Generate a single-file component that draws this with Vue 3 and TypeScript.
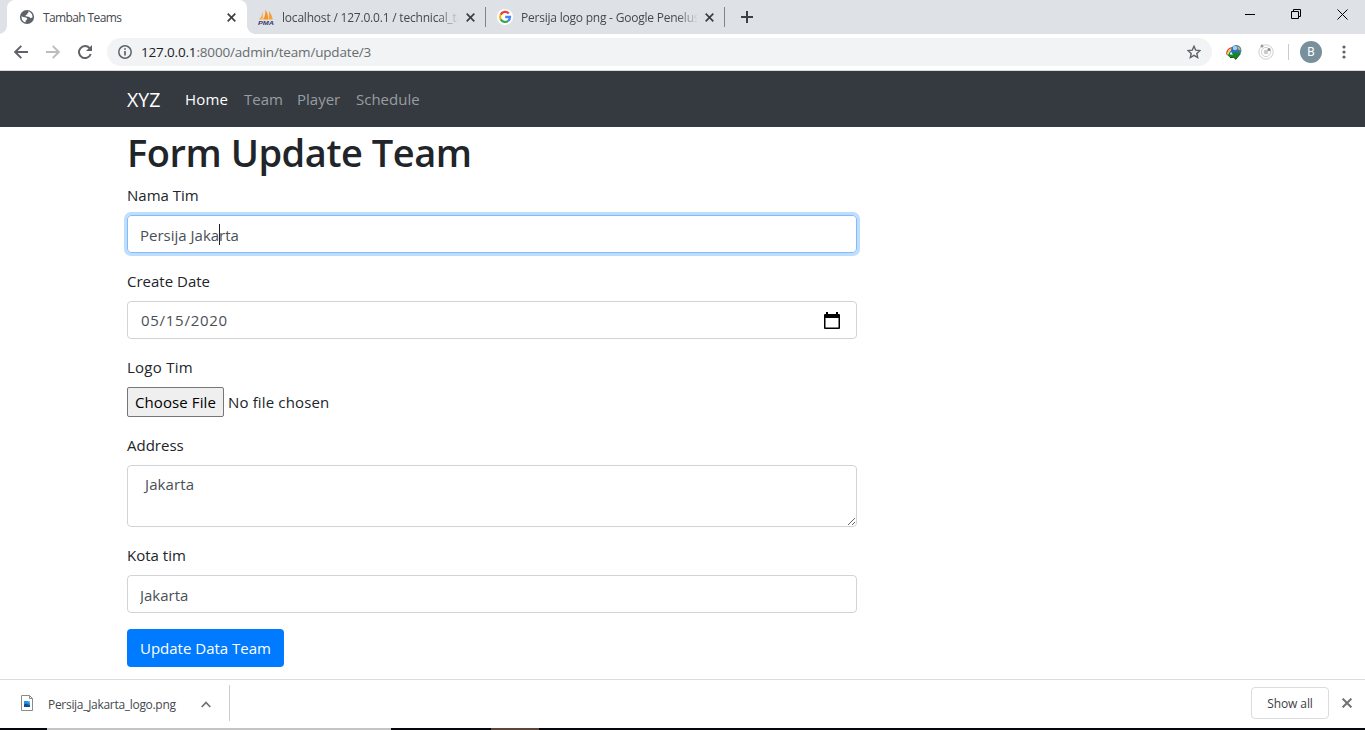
<script setup lang="ts">
import { ref } from 'vue'

interface Tab {
  icon: 'globe' | 'pma' | 'google'
  title: string
  active: boolean
}

interface NavItem {
  label: string
  key: string
}

const tabs: Tab[] = [
  { icon: 'globe', title: 'Tambah Teams', active: true },
  { icon: 'pma', title: 'localhost / 127.0.0.1 / technical_te', active: false },
  { icon: 'google', title: 'Persija logo png - Google Penelus', active: false },
]

const navItems: NavItem[] = [
  { label: 'Home', key: 'home' },
  { label: 'Team', key: 'team' },
  { label: 'Player', key: 'player' },
  { label: 'Schedule', key: 'schedule' },
]

const teamName = ref('Persija Jakarta')
const createDate = ref('05/15/2020')
const address = ref(' Jakarta')
const city = ref('Jakarta')
</script>

<template>
  <div class="window">
    <div class="tab-strip">
      <div v-for="tab in tabs" :key="tab.icon" class="tab" :class="[tab.icon, { active: tab.active }]">
        <svg v-if="tab.icon === 'globe'" class="favicon" width="16" height="16" viewBox="0 0 16 16">
          <circle cx="8" cy="8" r="7.1" fill="#5f6368" />
          <path d="M8.8 2.3 11 3 13 5.3 13.6 8.2 11.6 9.2 10.3 8 8.2 7.4 6.6 7.2 6.7 5.9 8.3 5.4 8.2 4.4 9.6 3.7ZM2.3 7.3 4.2 7.9 7 8.6 8.4 9.8 7.6 11 6.6 11.4 6.7 13.3 5 13 3 10.8Z" fill="#fff" />
        </svg>
        <svg v-else-if="tab.icon === 'pma'" class="favicon" width="16" height="16" viewBox="0 0 16 16">
          <path d="M1 10.5Q4 7.5 4.8 2.5Q5.6 7 4.5 10.5Z" fill="#f9b05c" />
          <path d="M5 10.5Q7.8 6.5 7.4.8Q10.5 5 10 10.5Z" fill="#f7941d" />
          <path d="M10.3 10.5Q11.8 6.5 10.8 2Q14.4 6 14.8 10.5Z" fill="#f8a23a" />
          <text x="0" y="15.6" class="pma-text" textLength="16" lengthAdjust="spacingAndGlyphs">PMA</text>
        </svg>
        <svg v-else class="favicon" width="16" height="16" viewBox="0 0 16 16">
          <circle cx="8" cy="8" r="8" fill="#fff" />
          <g fill="none" stroke-width="2.3">
            <path d="M11.8 4.6A5 5 0 0 0 3.6 5.7" stroke="#ea4335" />
            <path d="M3.6 5.7A5 5 0 0 0 3.6 10.3" stroke="#fbbc05" />
            <path d="M3.6 10.3A5 5 0 0 0 11.2 11.8" stroke="#34a853" />
            <path d="M11.2 11.8A5 5 0 0 0 13 8H8.2" stroke="#4285f4" />
          </g>
        </svg>
        <span class="tab-title">{{ tab.title }}</span>
        <svg class="tab-close" width="9" height="9" viewBox="0 0 9 9">
          <path d="M.7.7 8.3 8.3M8.3.7.7 8.3" stroke="#3c4043" stroke-width="1.7" />
        </svg>
      </div>
      <svg class="new-tab" width="12" height="12" viewBox="0 0 12 12">
        <path d="M6 0V12M0 6H12" stroke="#3c4043" stroke-width="2" />
      </svg>
      <div class="window-controls">
        <svg width="10" height="10" viewBox="0 0 10 10"><path d="M0 5.5H10" stroke="#000" /></svg>
        <svg width="10" height="10" viewBox="0 0 10 10" fill="none" stroke="#000">
          <path d="M.5 2.5H7.5V9.5H.5ZM2.5 2.5V.5H9.5V7.5H7.5" />
        </svg>
        <svg width="11" height="11" viewBox="0 0 11 11"><path d="M.5.5 10.5 10.5M10.5.5.5 10.5" stroke="#000" /></svg>
      </div>
    </div>

    <div class="toolbar">
      <svg class="back" width="14" height="14" viewBox="0 0 14 14" fill="none" stroke="#5f6368" stroke-width="1.9">
        <path d="M14 7H1.5M7.3.9 1.2 7 7.3 13.1" />
      </svg>
      <svg class="forward" width="14" height="14" viewBox="0 0 14 14" fill="none" stroke="#babcbe" stroke-width="1.9">
        <path d="M0 7H12.5M6.7.9 12.8 7 6.7 13.1" />
      </svg>
      <svg class="reload" width="14" height="14" viewBox="0 0 14 14">
        <path d="M11.6 3.2A6 6 0 1 0 12.7 9" fill="none" stroke="#5f6368" stroke-width="2" />
        <path d="M14 0V6H8Z" fill="#5f6368" />
      </svg>
      <div class="omnibox">
        <svg width="14" height="14" viewBox="0 0 14 14">
          <circle cx="7" cy="7" r="6.2" fill="none" stroke="#5f6368" stroke-width="1.5" />
          <path d="M7 3.2V4.8M7 6V10.6" stroke="#5f6368" stroke-width="1.7" />
        </svg>
        <span class="url"><b>127.0.0.1</b>:8000/admin/team/update/3</span>
        <svg class="star" width="14" height="14" viewBox="0 0 14 14">
          <path d="M7 1.3 8.7 5.1 13 5.5 9.8 8.4 10.7 12.6 7 10.4 3.3 12.6 4.2 8.4 1 5.5 5.3 5.1Z" fill="none" stroke="#5f6368" stroke-width="1.4" />
        </svg>
      </div>
      <svg class="ext-idm" width="18" height="16" viewBox="0 0 18 16">
        <path d="M1.8 10.5Q1.4 5 7 3.6" fill="none" stroke="#e33b24" stroke-width="1.3" />
        <path d="M3 11Q2.6 6.4 7.4 4.8" fill="none" stroke="#f2dc27" stroke-width="1.4" />
        <path d="M4.2 11.2Q4.2 7.8 7.6 6.2" fill="none" stroke="#2367bd" stroke-width="1.2" />
        <circle cx="11.2" cy="6.2" r="5.2" fill="#2d6fc0" />
        <circle cx="10" cy="4" r="2.2" fill="#9ed1f5" />
        <path d="M12.2 2 15 3.6 16 6.4 14 6.2 12.6 4.4Z" fill="#c9b23f" />
        <path d="M1.6 10.4 8 10.6 7.4 8.4 16 8.8 10.6 15.4 9 13.2 5 13.6Z" fill="#138a21" />
        <path d="M5 13.6 9 13.2 10.6 15.4 15.4 9.8" fill="none" stroke="#154b18" />
      </svg>
      <svg class="ext-orbit" width="16" height="16" viewBox="0 0 16 16">
        <g fill="none" stroke="#cfcfcf">
          <circle cx="8" cy="8" r="7.2" />
          <circle cx="8" cy="8" r="4.6" />
        </g>
        <circle cx="8" cy="8" r="2.3" fill="#cacaca" />
        <circle cx="4" cy="1.9" r="1.5" fill="#999" />
        <circle cx="11" cy="5.4" r="1.5" fill="#8c8c8c" />
      </svg>
      <span class="divider"></span>
      <span class="avatar">B</span>
      <svg class="menu" width="4" height="14" viewBox="0 0 4 14" fill="#5f6368">
        <circle cx="2" cy="2" r="1.6" /><circle cx="2" cy="7" r="1.6" /><circle cx="2" cy="12" r="1.6" />
      </svg>
    </div>

    <nav class="navbar">
      <a class="brand">XYZ</a>
      <a v-for="item in navItems" :key="item.key" class="nav-link" :class="item.key">{{ item.label }}</a>
    </nav>

    <main class="page">
      <h1>Form Update Team</h1>
      <form @submit.prevent>
        <div class="group">
          <label>Nama Tim</label>
          <div class="control focused">
            <input v-model="teamName" class="v-name" type="text" spellcheck="false" />
            <span class="caret"></span>
          </div>
        </div>
        <div class="group">
          <label>Create Date</label>
          <div class="control">
            <input v-model="createDate" class="v-date" type="text" />
            <svg class="calendar" width="16" height="17" viewBox="0 0 16 17">
              <path d="M2 0H4V2H12V0H14V2H15Q16 2 16 3V16Q16 17 15 17H1Q0 17 0 16V3Q0 2 1 2H2ZM1.5 6V15.4H14.5V6Z" fill="#000" fill-rule="evenodd" />
            </svg>
          </div>
        </div>
        <div class="group">
          <label class="l-logo">Logo Tim</label>
          <div class="file-row">
            <button type="button" class="choose">Choose File</button>
            <span class="file-name">No file chosen</span>
          </div>
        </div>
        <div class="group">
          <label>Address</label>
          <textarea v-model="address" class="v-address" spellcheck="false"></textarea>
        </div>
        <div class="group">
          <label>Kota tim</label>
          <div class="control">
            <input v-model="city" class="v-city" type="text" spellcheck="false" />
          </div>
        </div>
        <button class="submit" type="submit">Update Data Team</button>
      </form>
    </main>

    <footer class="downloads">
      <svg class="file-icon" width="12" height="16" viewBox="0 0 12 16">
        <path d="M.5.5H8.5L11.5 3.5V15.5H.5Z" fill="#fff" stroke="#8b8b8b" />
        <path d="M8.5.5V3.5H11.5" fill="none" stroke="#8b8b8b" />
        <path d="M3 6H9V12H3Z" fill="#2a8fe0" />
        <path d="M3 12V9.5L5 8.5 9 10.5V12Z" fill="#124d91" />
        <path d="M6.5 6H9V8.5Z" fill="#6fc3f5" />
      </svg>
      <span class="download-name">Persija_Jakarta_logo.png</span>
      <svg class="chevron" width="10" height="7" viewBox="0 0 10 7">
        <path d="M.7 6 5 1.5 9.3 6" fill="none" stroke="#6f7377" stroke-width="1.8" />
      </svg>
      <span class="download-divider"></span>
      <button class="show-all" type="button">Show all</button>
      <svg class="close-bar" width="10" height="10" viewBox="0 0 10 10">
        <path d="M.6.6 9.4 9.4M9.4.6.6 9.4" stroke="#6f7377" stroke-width="2" />
      </svg>
    </footer>
    <div class="taskbar-edge"><i class="dark-start"></i><i class="light"></i><i class="dark"></i><i class="brown"></i></div>
  </div>
</template>

<style>
html,
body {
  margin: 0;
  overflow: hidden;
  background: #fff;
}
</style>

<style scoped>
* {
  box-sizing: border-box;
}

.window {
  width: 1365px;
  height: 730px;
  display: flex;
  flex-direction: column;
  overflow: hidden;
  background: #fff;
  color: #212529;
  font-family: "Open Sans", "Noto Sans", sans-serif;
  font-size: 15px;
}

svg {
  display: block;
  flex: none;
}

.tab-strip {
  height: 34px;
  flex: none;
  display: flex;
  padding-left: 7px;
  background: #dee1e6;
}

.tab {
  position: relative;
  width: 239px;
  flex: none;
  display: flex;
  align-items: center;
  padding-left: 11px;
  font-size: 12px;
  color: #45494d;
}

.tab.active {
  width: 240px;
  padding-left: 12px;
  background: #fff;
  border-radius: 8px 8px 0 0;
}

.tab.active::before,
.tab.active::after {
  content: "";
  position: absolute;
  bottom: 0;
  width: 8px;
  height: 8px;
}

.tab.active::before {
  left: -8px;
  background: radial-gradient(circle at 0 0, transparent 7.5px, #fff 8px);
}

.tab.active::after {
  right: -8px;
  background: radial-gradient(circle at 100% 0, transparent 7.5px, #fff 8px);
}

.tab:not(.active)::after {
  content: "";
  position: absolute;
  right: 0;
  top: 7px;
  width: 1px;
  height: 20px;
  background: #808387;
}

.pma-text {
  font: italic bold 6px "Liberation Sans", sans-serif;
  fill: #343a70;
}

.tab-title {
  width: 176px;
  margin-left: 8px;
  margin-right: 8px;
  white-space: nowrap;
  letter-spacing: -0.2px;
}

.tab.active .tab-title {
  letter-spacing: -0.62px;
}

.tab.google .tab-title {
  letter-spacing: -0.22px;
}

.tab:not(.active) .tab-title {
  mask-image: linear-gradient(90deg, #000 156px, transparent 178px);
}

.new-tab {
  margin: 11px 0 0 16px;
}

.window-controls {
  margin-left: auto;
  display: flex;
  gap: 36px;
  padding: 9px 17px 0 0;
}

.toolbar {
  height: 37px;
  flex: none;
  display: flex;
  align-items: center;
  padding-left: 14px;
  border-bottom: 1px solid #d8dadd;
}

.forward {
  margin-left: 18px;
}

.reload {
  margin-left: 18px;
}

.omnibox {
  width: 1105px;
  height: 28px;
  margin-left: 15px;
  display: flex;
  align-items: center;
  border-radius: 14px;
  padding: 0 11px;
  background: #f1f3f4;
}

.url {
  margin-left: 9px;
  font-size: 13.5px;
  letter-spacing: -0.17px;
  color: #686c70;
}

.url b {
  font-weight: 400;
  color: #202124;
}

.star {
  margin-left: auto;
}

.ext-idm {
  margin-left: 13px;
}

.ext-orbit {
  margin-left: 15px;
}

.divider {
  width: 1px;
  height: 16px;
  margin-left: 14px;
  background: #c8cace;
}

.avatar {
  width: 22px;
  height: 22px;
  margin-left: 11px;
  border-radius: 50%;
  background: #78909c;
  color: #fff;
  font: 12px/22px Roboto, sans-serif;
  text-align: center;
}

.menu {
  margin-left: 20px;
}

.navbar {
  height: 56px;
  flex: none;
  display: flex;
  align-items: center;
  padding-left: 127px;
  background: #343a40;
}

.brand {
  width: 34px;
  margin-right: 24px;
  font-size: 19.5px;
  color: #fff;
  white-space: nowrap;
}

.nav-link {
  margin-right: 16px;
  color: #9a9da0;
  white-space: nowrap;
}

.nav-link.home {
  width: 43px;
  letter-spacing: 0.2px;
  color: #fff;
}

.nav-link.team {
  width: 37px;
}

.nav-link.player {
  width: 43px;
}

.page {
  width: 730px;
  height: 552px;
  flex: none;
  margin-left: 127px;
}

h1 {
  margin: 0 0 8px;
  padding-top: 2px;
  font-size: 38px;
  line-height: 46px;
  height: 48px;
  font-weight: 600;
  letter-spacing: -0.46px;
  white-space: nowrap;
}

.group {
  margin-bottom: 16px;
}

label {
  display: block;
  height: 24px;
  margin-bottom: 8px;
  line-height: 24px;
}

.l-logo {
  letter-spacing: 0.25px;
}

.control {
  position: relative;
  height: 38px;
  display: flex;
  align-items: center;
  border: 1px solid #ced4da;
  border-radius: 4px;
  padding: 0 12px;
}

.control.focused {
  border-color: #80bdff;
  box-shadow: 0 0 0 3px #bfdeff;
}

input,
textarea {
  display: block;
  margin: 0;
  outline: none;
  font: inherit;
  line-height: 24px;
  color: #495057;
}

input {
  width: 100%;
  height: 24px;
  border: 0;
  padding: 0;
  background: transparent;
}

.v-name,
.v-city {
  height: 26px;
  padding-top: 2px;
}

.v-date {
  padding-left: 1px;
  letter-spacing: 0.72px;
}

.v-address {
  letter-spacing: 0.1px;
}

textarea {
  width: 730px;
  height: 62px;
  padding: 6px 12px 6px 13px;
  border: 1px solid #ced4da;
  border-radius: 4px;
  resize: vertical;
}

.caret {
  position: absolute;
  left: 91px;
  top: 8px;
  width: 1px;
  height: 21px;
  background: #222;
}

.calendar {
  margin-right: 4px;
}

.file-row {
  height: 30px;
  display: flex;
  align-items: center;
}

.choose {
  width: 97px;
  height: 30px;
  padding: 0;
  border: 1px solid #767676;
  border-radius: 2px;
  background: #efefef;
  font: inherit;
  letter-spacing: 0.1px;
  color: #000;
  white-space: nowrap;
}

.file-name {
  margin-left: 4px;
  letter-spacing: 0.15px;
}

.submit {
  display: block;
  width: 157px;
  height: 38px;
  padding: 0;
  border: 0;
  border-radius: 4px;
  background: #007bff;
  font: inherit;
  color: #fff;
  white-space: nowrap;
}

.downloads {
  height: 49px;
  flex: none;
  display: flex;
  align-items: center;
  border-top: 1px solid #d9dbde;
  padding: 0 13px 2px 21px;
  font-size: 12px;
}

.download-name {
  width: 128px;
  margin-left: 15px;
  padding-top: 2px;
  letter-spacing: -0.3px;
  color: #45494d;
  white-space: nowrap;
}

.chevron {
  margin: 2px 0 0 25px;
}

.download-divider {
  width: 1px;
  height: 36px;
  margin-left: 18px;
  background: #c9cbce;
}

.show-all {
  width: 78px;
  height: 32px;
  margin-left: auto;
  padding: 0;
  border: 1px solid #dadce0;
  border-radius: 4px;
  background: #fff;
  font: inherit;
  font-weight: 500;
  letter-spacing: -0.1px;
  color: #3c4043;
}

.close-bar {
  margin-left: 13px;
}

.taskbar-edge {
  height: 2px;
  flex: none;
  display: flex;
  background: #05070d;
}

.dark-start {
  width: 47px;
}

.light {
  width: 344px;
  background: #c4c4c4;
}

.dark {
  width: 100px;
}

.brown {
  width: 48px;
  background: #5d4638;
}
</style>
